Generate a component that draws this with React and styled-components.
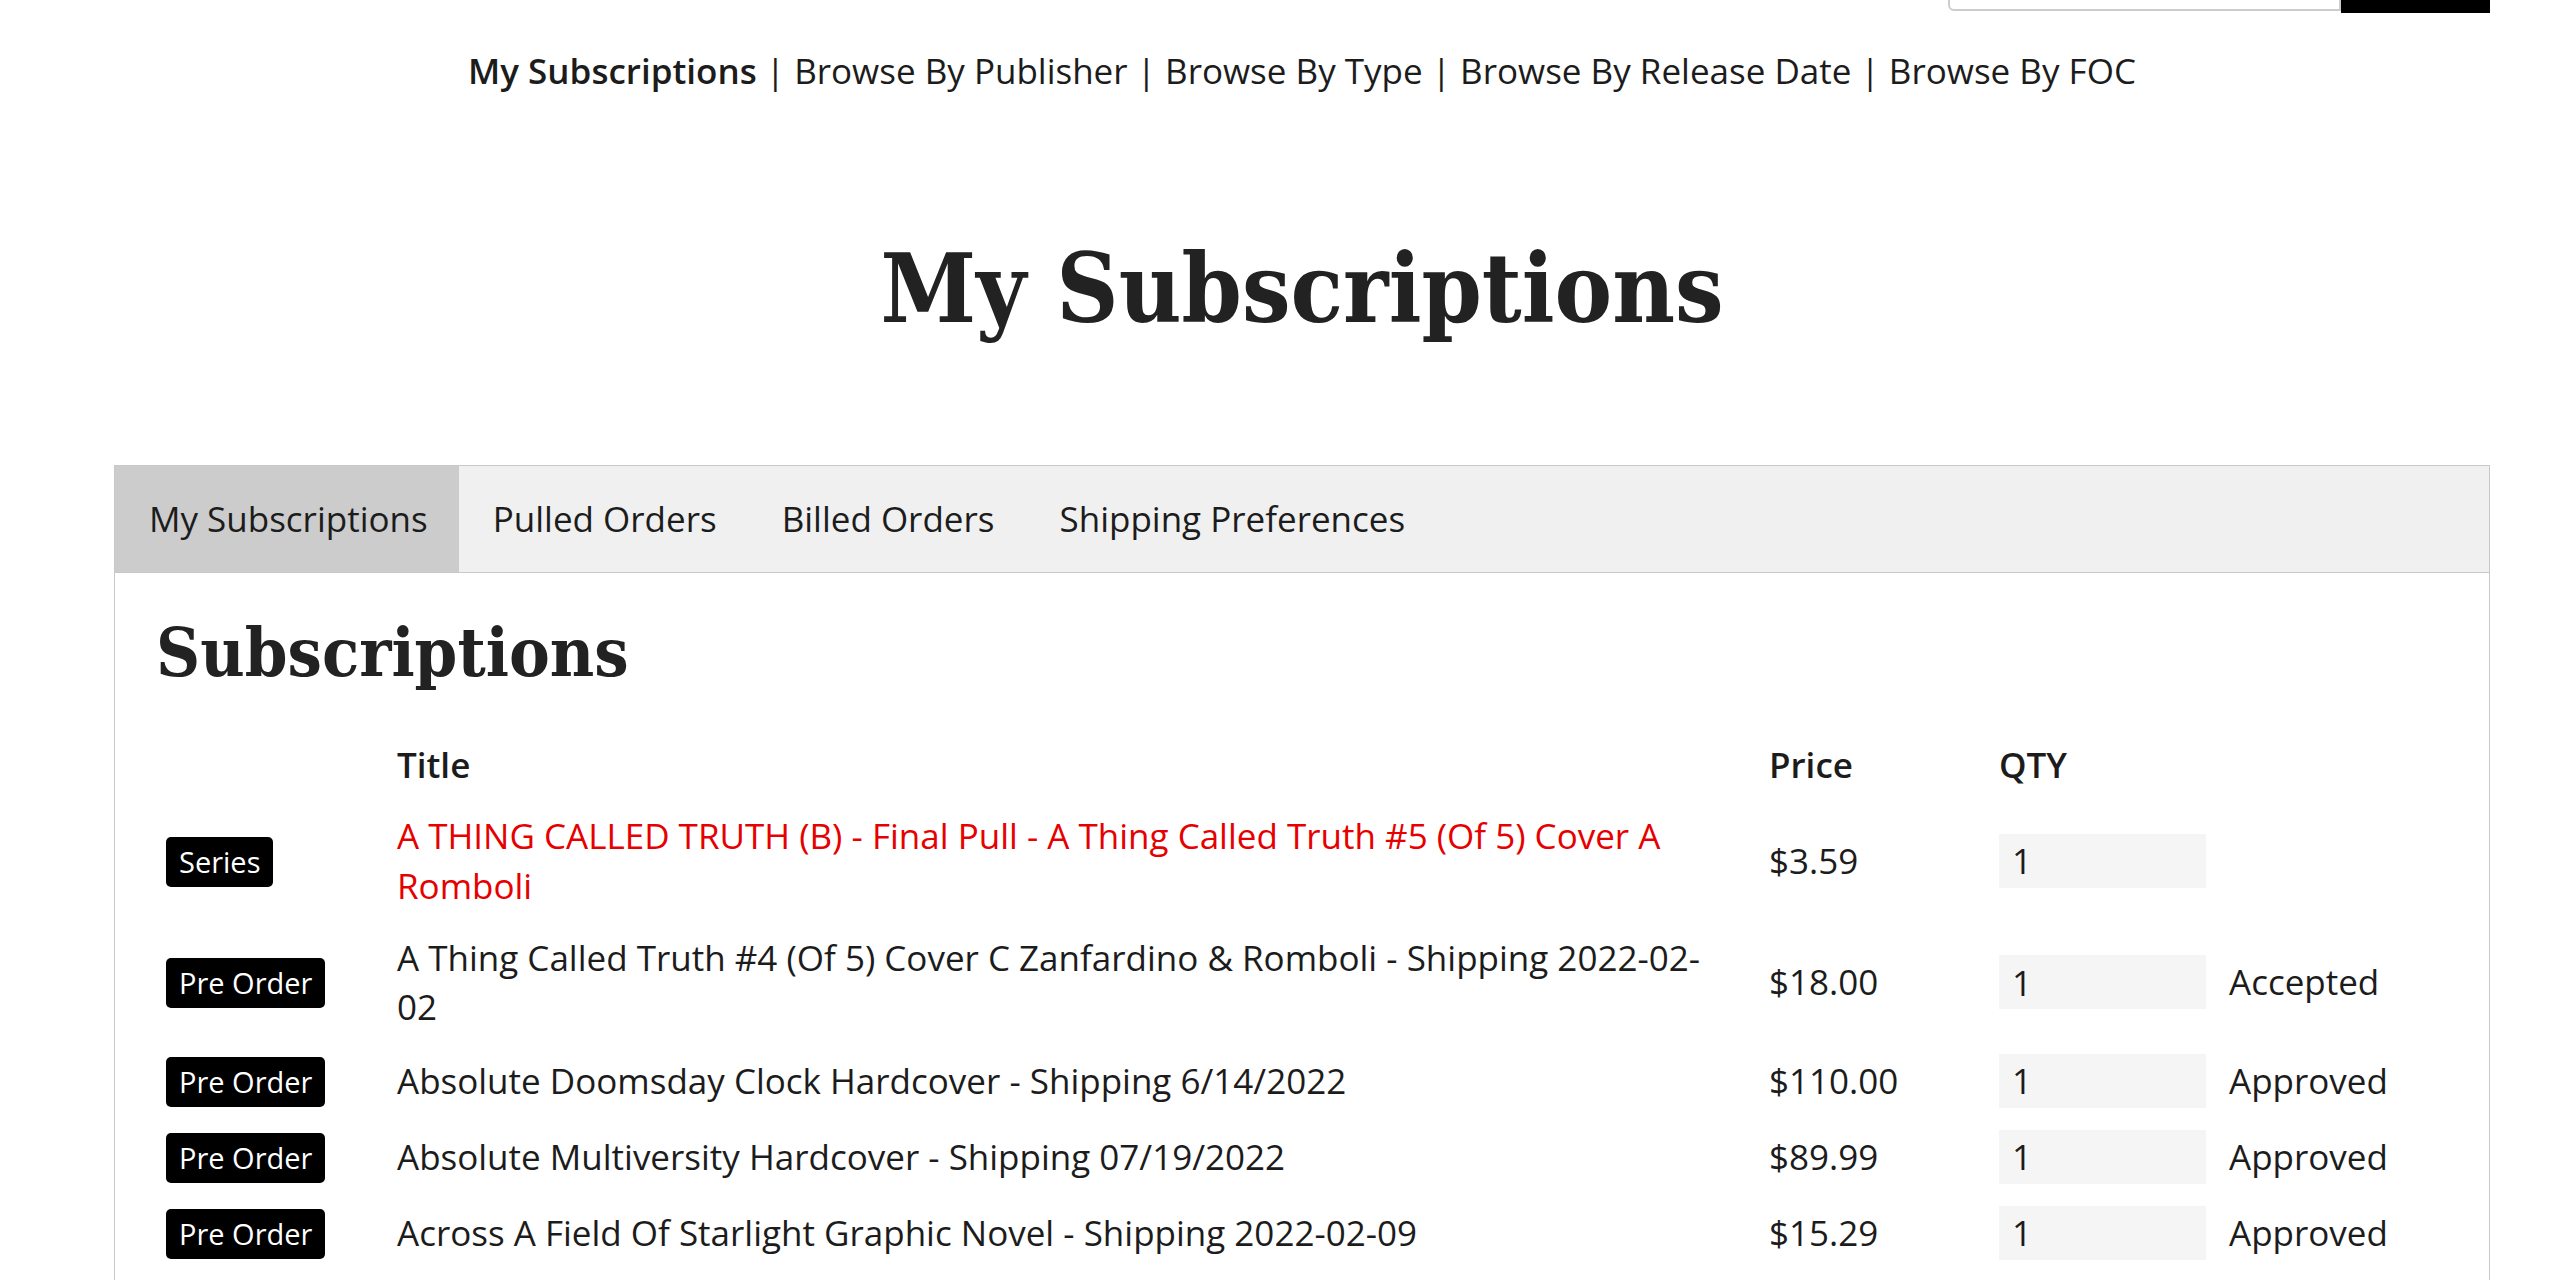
import React from "react";
import styled, { createGlobalStyle } from "styled-components";

const GlobalStyle = createGlobalStyle`
  html, body {
    margin: 0;
    padding: 0;
    background: #fff;
  }
  body {
    font-family: "Open Sans", "Liberation Sans", sans-serif;
    font-size: 35px;
    line-height: 1.45;
    color: #1c1c1c;
  }
`;

const Page = styled.div`
  width: 2376px;
  margin-left: 114px;
`;

const SearchBar = styled.div`
  display: flex;
  justify-content: flex-end;
  margin-top: -40px;
`;

const SearchInput = styled.input`
  box-sizing: border-box;
  width: 393px;
  height: 51px;
  border: 2px solid #cccccc;
  border-radius: 0 0 0 6px;
  background: #fff;
`;

const SearchButton = styled.button`
  width: 149px;
  height: 53px;
  background: #000;
  border: none;
`;

const Nav = styled.nav`
  margin-top: 33px;
  text-align: center;
`;

const NavLink = styled.a`
  color: #1c1c1c;
  text-decoration: none;
  font-weight: ${(p) => (p.active ? 600 : 400)};
`;

const Heading = styled.h1`
  margin: 134px 0 0;
  text-align: center;
  font-family: "DejaVu Serif Condensed", "DejaVu Serif", serif;
  font-stretch: condensed;
  font-weight: 700;
  font-size: 96px;
  line-height: 1.2;
  color: #222;
`;

const Panel = styled.section`
  margin-top: 119px;
  border: 1px solid #c8c8c8;
  border-bottom: none;
`;

const TabBar = styled.div`
  display: flex;
  height: 106px;
  background: #f0f0f0;
  border-bottom: 1px solid #c8c8c8;
`;

const Tab = styled.div`
  display: flex;
  align-items: center;
  padding: 0 31px 0 34px;
  background: ${(p) => (p.active ? "#cccccc" : "transparent")};
  color: #1c1c1c;
`;

const Content = styled.div`
  padding: 0 40px 40px 41px;
`;

const SubHeading = styled.h2`
  margin: 39px 0 35px;
  font-family: "DejaVu Serif Condensed", "DejaVu Serif", serif;
  font-stretch: condensed;
  font-weight: 700;
  font-size: 68px;
  line-height: 1.2;
  color: #222;
`;

const Table = styled.table`
  width: 100%;
  border-collapse: collapse;
  table-layout: fixed;
  line-height: 1.42;
`;

const HeadCell = styled.th`
  padding: 11px 10px;
  text-align: left;
  font-weight: 600;
`;

const Cell = styled.td`
  padding: 11px ${(p) => p.padRight || 10}px 11px 10px;
  vertical-align: middle;
  color: ${(p) => (p.red ? "#e60000" : "#1c1c1c")};
`;

const Badge = styled.span`
  display: inline-block;
  padding: 0 13px;
  background: #000;
  color: #fff;
  font-size: 29px;
  line-height: 50px;
  border-radius: 5px;
`;

const QtyInput = styled.input`
  box-sizing: border-box;
  width: 207px;
  height: 54px;
  padding: 0 13px;
  border: none;
  background: #f5f5f5;
  font-family: inherit;
  font-size: 35px;
  color: #1c1c1c;
`;

const navItems = [
  "My Subscriptions",
  "Browse By Publisher",
  "Browse By Type",
  "Browse By Release Date",
  "Browse By FOC",
];

const tabs = ["My Subscriptions", "Pulled Orders", "Billed Orders", "Shipping Preferences"];

const rows = [
  {
    type: "Series",
    title: "A THING CALLED TRUTH (B) - Final Pull - A Thing Called Truth #5 (Of 5) Cover A Romboli",
    price: "$3.59",
    status: "",
    red: true,
  },
  {
    type: "Pre Order",
    title: "A Thing Called Truth #4 (Of 5) Cover C Zanfardino & Romboli - Shipping 2022-02-02",
    price: "$18.00",
    status: "Accepted",
  },
  {
    type: "Pre Order",
    title: "Absolute Doomsday Clock Hardcover - Shipping 6/14/2022",
    price: "$110.00",
    status: "Approved",
  },
  {
    type: "Pre Order",
    title: "Absolute Multiversity Hardcover - Shipping 07/19/2022",
    price: "$89.99",
    status: "Approved",
  },
  {
    type: "Pre Order",
    title: "Across A Field Of Starlight Graphic Novel - Shipping 2022-02-09",
    price: "$15.29",
    status: "Approved",
  },
];

const App = () => {
  return (
    <>
      <GlobalStyle />
      <Page>
        <SearchBar>
          <SearchInput type="text" />
          <SearchButton />
        </SearchBar>
        <Nav>
          {navItems.map((item, i) => (
            <React.Fragment key={item}>
              {i > 0 && " | "}
              <NavLink href="#" active={i === 0}>
                {item}
              </NavLink>
            </React.Fragment>
          ))}
        </Nav>
        <Heading>My Subscriptions</Heading>
        <Panel>
          <TabBar>
            {tabs.map((tab, i) => (
              <Tab key={tab} active={i === 0}>
                {tab}
              </Tab>
            ))}
          </TabBar>
          <Content>
            <SubHeading>Subscriptions</SubHeading>
            <Table>
              <colgroup>
                <col style={{ width: 231 }} />
                <col style={{ width: 1372 }} />
                <col style={{ width: 230 }} />
                <col style={{ width: 230 }} />
                <col />
              </colgroup>
              <thead>
                <tr>
                  <HeadCell />
                  <HeadCell>Title</HeadCell>
                  <HeadCell>Price</HeadCell>
                  <HeadCell>QTY</HeadCell>
                  <HeadCell />
                </tr>
              </thead>
              <tbody>
                {rows.map((row) => (
                  <tr key={row.title}>
                    <Cell>
                      <Badge>{row.type}</Badge>
                    </Cell>
                    <Cell red={row.red} padRight={40}>
                      {row.title}
                    </Cell>
                    <Cell>{row.price}</Cell>
                    <Cell>
                      <QtyInput type="text" defaultValue="1" />
                    </Cell>
                    <Cell>{row.status}</Cell>
                  </tr>
                ))}
              </tbody>
            </Table>
          </Content>
        </Panel>
      </Page>
    </>
  );
};

export default App;
